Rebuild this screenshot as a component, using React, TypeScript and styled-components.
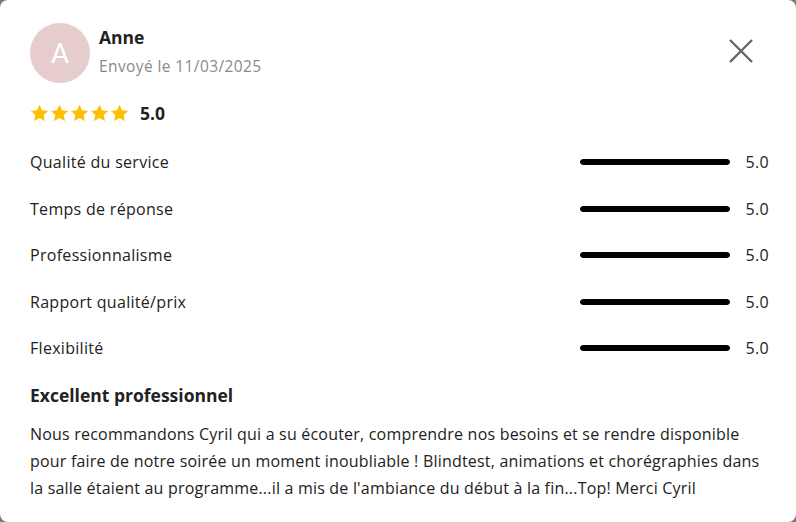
import React from "react";
import styled, { createGlobalStyle } from "styled-components";

const GlobalStyle = createGlobalStyle`
  html, body {
    margin: 0;
    padding: 0;
    background: #7a7a7a;
  }
  * {
    box-sizing: border-box;
  }
`;

type Criterion = { label: string; score: number };

const criteria: Criterion[] = [
  { label: "Qualité du service", score: 5 },
  { label: "Temps de réponse", score: 5 },
  { label: "Professionnalisme", score: 5 },
  { label: "Rapport qualité/prix", score: 5 },
  { label: "Flexibilité", score: 5 },
];

function Star() {
  return (
    <svg width="19" height="18" viewBox="0 0 24 23">
      <path
        d="M12 0.8l3.3 7.1 7.8 0.9-5.8 5.3 1.6 7.7L12 17.9l-6.9 3.9 1.6-7.7L0.9 8.8l7.8-0.9z"
        fill="#ffbf00"
      />
    </svg>
  );
}

function ReviewModal() {
  return (
    <Card>
      <Header>
        <Avatar>A</Avatar>
        <Author>
          <Name>Anne</Name>
          <SentDate>Envoyé le 11/03/2025</SentDate>
        </Author>
        <CloseButton aria-label="Fermer">
          <svg width="26" height="26" viewBox="0 0 26 26">
            <path
              d="M2 2L24 24M24 2L2 24"
              stroke="#666"
              strokeWidth="2.4"
              fill="none"
            />
          </svg>
        </CloseButton>
      </Header>

      <Overall>
        <Stars>
          {[0, 1, 2, 3, 4].map((i) => (
            <Star key={i} />
          ))}
        </Stars>
        <OverallScore>5.0</OverallScore>
      </Overall>

      <CriteriaList>
        {criteria.map((c) => (
          <CriterionRow key={c.label}>
            <CriterionLabel>{c.label}</CriterionLabel>
            <Track>
              <Fill style={{ width: `${(c.score / 5) * 100}%` }} />
            </Track>
            <CriterionScore>{c.score.toFixed(1)}</CriterionScore>
          </CriterionRow>
        ))}
      </CriteriaList>

      <ReviewTitle>Excellent professionnel</ReviewTitle>
      <ReviewText>
        Nous recommandons Cyril qui a su écouter, comprendre nos besoins et se
        rendre disponible pour faire de notre soirée un moment inoubliable !
        Blindtest, animations et chorégraphies dans la salle étaient au
        programme...il a mis de l'ambiance du début à la fin...Top! Merci Cyril
      </ReviewText>
    </Card>
  );
}

export default function App() {
  return (
    <>
      <GlobalStyle />
      <ReviewModal />
    </>
  );
}

const Card = styled.div`
  width: 796px;
  height: 522px;
  background: #ffffff;
  border-radius: 8px;
  padding: 23px 27px 0 30px;
  font-family: "Open Sans", Lato, sans-serif;
  color: #222222;
`;

const Header = styled.div`
  display: flex;
  align-items: flex-start;
`;

const Avatar = styled.div`
  width: 60px;
  height: 60px;
  border-radius: 50%;
  background: #e6cccd;
  color: #ffffff;
  display: flex;
  align-items: center;
  justify-content: center;
  font-size: 26px;
  font-family: Lato, sans-serif;
  font-weight: 400;
  flex-shrink: 0;
`;

const Author = styled.div`
  margin-left: 9px;
  padding-top: 2px;
  flex: 1;
  display: flex;
  flex-direction: column;
  gap: 6px;
`;

const Name = styled.div`
  font-size: 17.5px;
  font-weight: 700;
  color: #222;
`;

const SentDate = styled.div`
  font-size: 15.5px;
  letter-spacing: 0.4px;
  color: #8a8a8a;
`;

const CloseButton = styled.button`
  border: none;
  background: none;
  padding: 0;
  margin: 15px 15px 0 0;
  width: 26px;
  height: 26px;
  cursor: pointer;
`;

const Overall = styled.div`
  display: flex;
  align-items: center;
  margin-top: 18px;
  gap: 11px;
`;

const Stars = styled.div`
  display: flex;
  gap: 1px;
`;

const OverallScore = styled.span`
  font-size: 17.5px;
  font-weight: 700;
`;

const CriteriaList = styled.div`
  display: flex;
  flex-direction: column;
  margin-top: 14px;
`;

const CriterionRow = styled.div`
  display: flex;
  align-items: center;
  height: 46.5px;
`;

const CriterionLabel = styled.span`
  flex: 1;
  font-size: 16px;
  letter-spacing: 0.3px;
`;

const Track = styled.div`
  width: 150px;
  height: 6px;
  border-radius: 3px;
  background: #e0e0e0;
  overflow: hidden;
`;

const Fill = styled.div`
  height: 100%;
  background: #000;
  border-radius: 3px;
`;

const CriterionScore = styled.span`
  width: 39px;
  text-align: right;
  font-size: 16px;
  letter-spacing: 0.3px;
`;

const ReviewTitle = styled.div`
  font-size: 17.5px;
  font-weight: 700;
  margin-top: 11px;
`;

const ReviewText = styled.p`
  font-size: 16px;
  letter-spacing: 0.2px;
  line-height: 27px;
  margin: 14px 0 0;
`;
